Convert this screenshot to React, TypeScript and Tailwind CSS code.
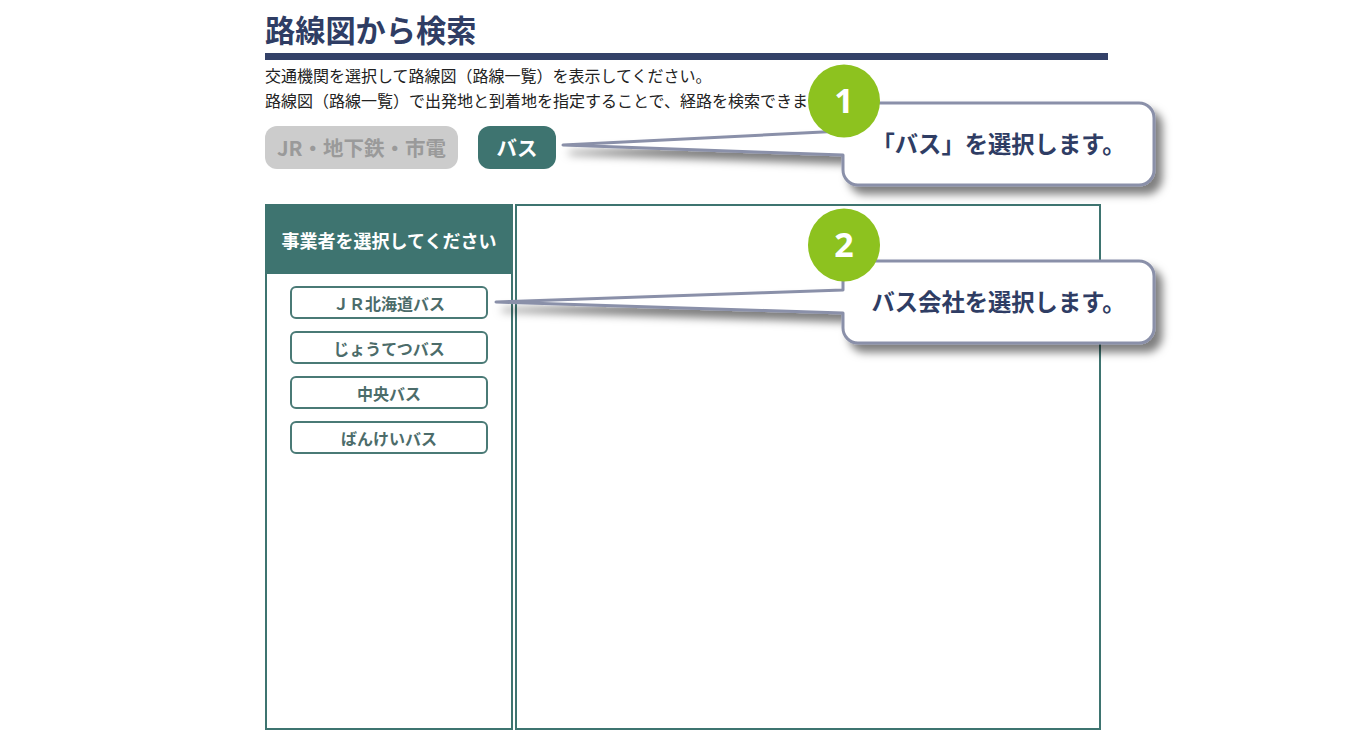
import React from "react"

const jp = { fontFamily: '"Noto Sans CJK JP", "Noto Sans", sans-serif' }
const num = { fontFamily: '"Open Sans", "Noto Sans", sans-serif' }

const companies = ["ＪＲ北海道バス", "じょうてつバス", "中央バス", "ばんけいバス"]

type Callout = {
  x1: number
  y1: number
  x2: number
  y2: number
  ty1: number
  ty2: number
  ax: number
  ay: number
  cx: number
  cy: number
  n: string
  text: string
}

const callouts: Callout[] = [
  { x1: 843, y1: 103, x2: 1154, y2: 185, ty1: 131, ty2: 155, ax: 563, ay: 145, cx: 844, cy: 101, n: "1", text: "「バス」を選択します。" },
  { x1: 843, y1: 261, x2: 1154, y2: 343, ty1: 290, ty2: 313, ax: 496, ay: 302, cx: 844, cy: 245, n: "2", text: "バス会社を選択します。" },
]

// rounded box with a tail on the left edge
function bubble(c: Callout, r = 15) {
  const { x1, y1, x2, y2, ty1, ty2, ax, ay } = c
  return [
    `M${x1 + r},${y1}`,
    `L${x2 - r},${y1}`,
    `A${r},${r} 0 0 1 ${x2},${y1 + r}`,
    `L${x2},${y2 - r}`,
    `A${r},${r} 0 0 1 ${x2 - r},${y2}`,
    `L${x1 + r},${y2}`,
    `A${r},${r} 0 0 1 ${x1},${y2 - r}`,
    `L${x1},${ty2}`,
    `L${ax},${ay}`,
    `L${x1},${ty1}`,
    `L${x1},${y1 + r}`,
    `A${r},${r} 0 0 1 ${x1 + r},${y1}`,
    "Z",
  ].join(" ")
}

export default function App() {
  return (
    <div className="relative h-[749px] w-full overflow-hidden bg-white" style={jp}>
      <div className="pl-[265px] pt-[9px]">
        {/* Heading */}
        <h1 className="h-[40px] text-[30.2px] font-bold leading-[40px] text-[#2f3d64]">路線図から検索</h1>
        <div className="mt-[4px] h-[7px] w-[843px] bg-[#334168]" />
        <div className="mt-[3px] text-[16px] leading-[25px] text-[#222]">
          <p>交通機関を選択して路線図（路線一覧）を表示してください。</p>
          <p>路線図（路線一覧）で出発地と到着地を指定することで、経路を検索できます。</p>
        </div>

        {/* Mode tabs */}
        <div className="mt-[13px] flex gap-[20px]">
          <button className="h-[43px] w-[193px] rounded-[12px] bg-[#cccccc] text-[20.5px] font-bold text-[#9a9a9a]">
            JR・地下鉄・市電
          </button>
          <button className="h-[43px] w-[78px] rounded-[12px] bg-[#3e7470] text-[20.5px] font-bold text-white">
            バス
          </button>
        </div>

        {/* Panels */}
        <div className="mt-[35px] flex gap-[2px]">
          <div className="h-[526px] w-[248px] border-2 border-[#3e7470]">
            <div className="flex h-[68px] items-center justify-center bg-[#3e7470] text-[18px] font-bold text-white">
              事業者を選択してください
            </div>
            <div className="flex flex-col items-center gap-[12px] pt-[12px]">
              {companies.map((c) => (
                <button
                  key={c}
                  className="h-[33px] w-[198px] rounded-[6px] border-2 border-[#4a7a76] text-[16px] font-bold text-[#4c6c6a]"
                >
                  {c}
                </button>
              ))}
            </div>
          </div>
          <div className="h-[526px] w-[586px] border-2 border-[#3e7470]" />
        </div>
      </div>

      {/* Callouts */}
      <svg className="pointer-events-none absolute left-0 top-0" width="1352" height="749">
        <defs>
          <filter id="sh" x="-10%" y="-30%" width="130%" height="180%">
            <feDropShadow dx="7" dy="8" stdDeviation="4" floodColor="#000" floodOpacity="0.5" />
          </filter>
        </defs>
        {callouts.map((c) => (
          <g key={c.n}>
            <path d={bubble(c)} fill="#fff" stroke="#8a90a9" strokeWidth="3" strokeLinejoin="round" filter="url(#sh)" />
            <ellipse cx={c.cx} cy={c.cy} rx="36" ry="36.5" fill="#8dc21f" />
          </g>
        ))}
      </svg>
      {callouts.map((c) => (
        <React.Fragment key={c.n}>
          <div
            className="absolute flex items-center justify-center text-[34px] font-bold leading-none text-white"
            style={{ ...num, left: c.cx - 36, top: c.cy - 37, width: 72, height: 72 }}
          >
            {c.n}
          </div>
          <div
            className="absolute flex items-center justify-center pb-[2px] text-[23.3px] font-bold text-[#2f3d64]"
            style={{ left: c.x1, top: c.y1, width: c.x2 - c.x1, height: c.y2 - c.y1 }}
          >
            {c.text}
          </div>
        </React.Fragment>
      ))}
    </div>
  )
}
